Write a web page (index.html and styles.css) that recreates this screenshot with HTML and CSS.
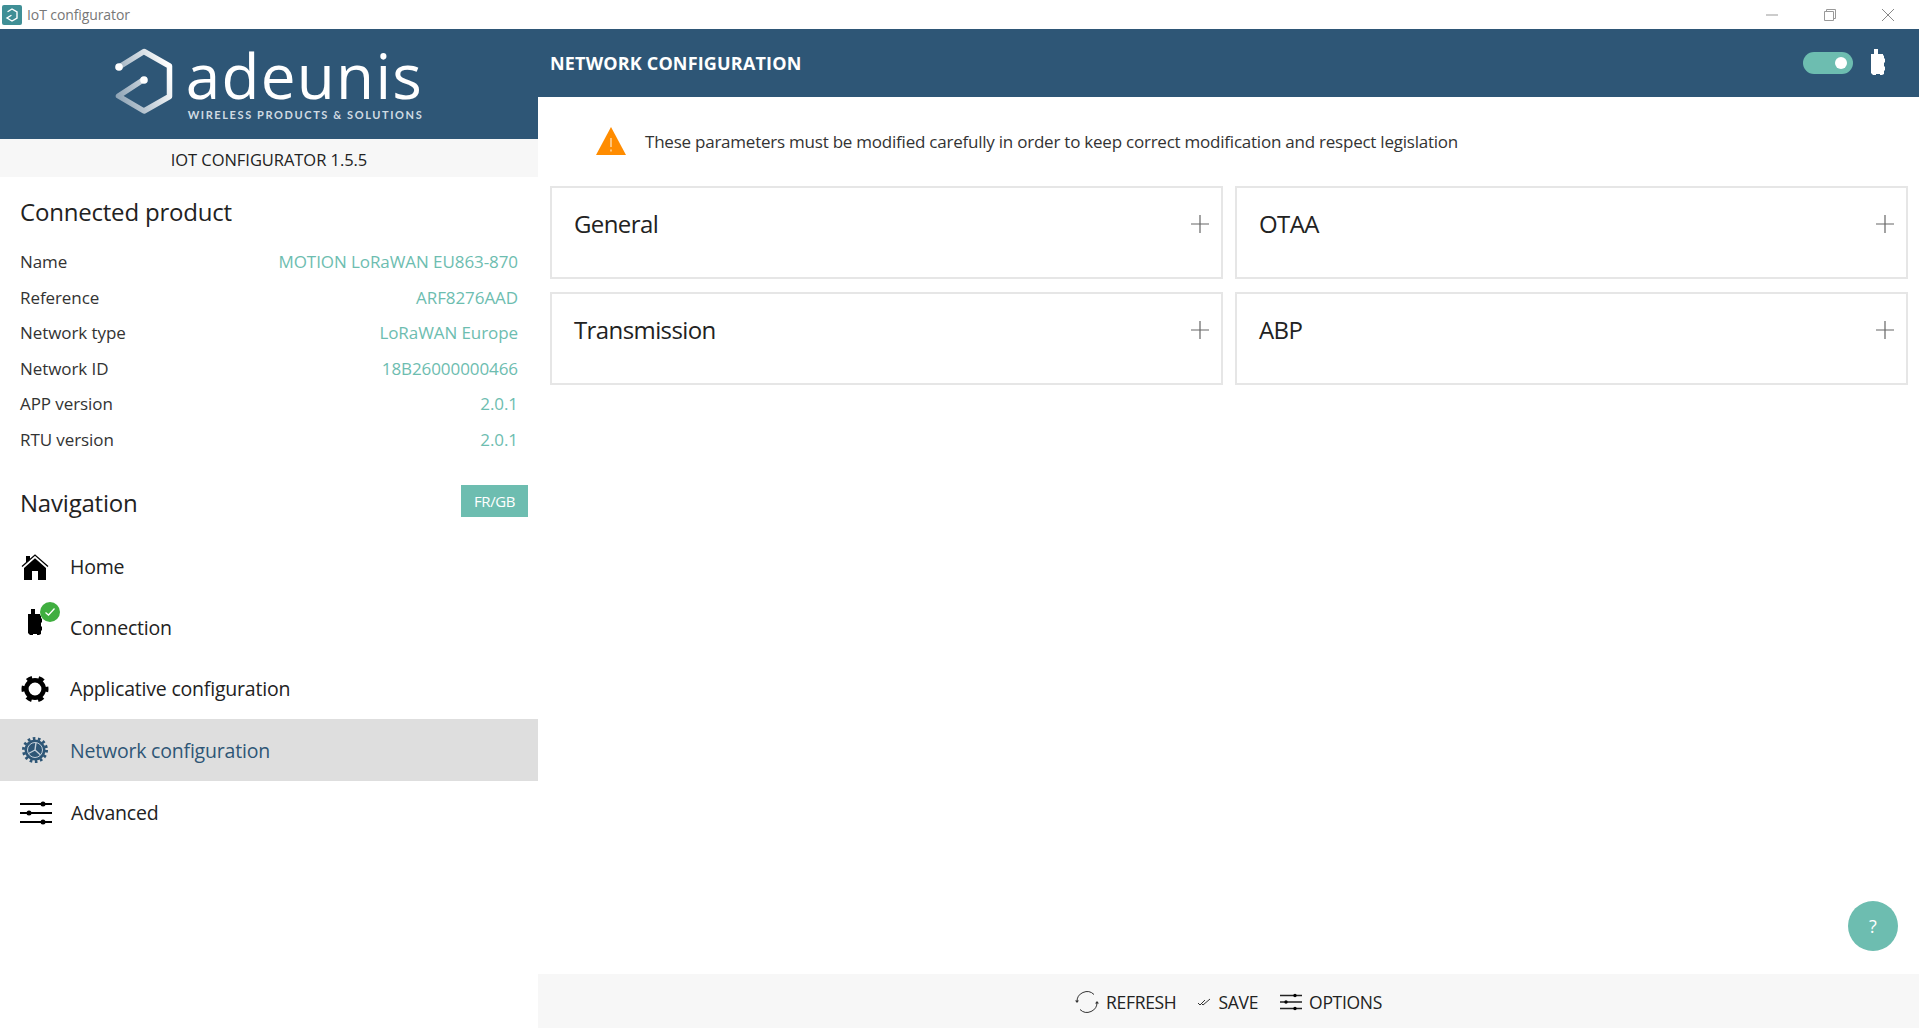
FILE: index.html
```html
<!DOCTYPE html>
<html lang="en">
<head>
  <meta charset="UTF-8">
  <title>IoT configurator</title>
  <link rel="stylesheet" href="styles.css">
</head>
<body>
  <!-- Window title bar -->
  <div class="titlebar">
    <div class="title-left">
      <svg class="app-icon" width="20" height="20" viewBox="0 0 20 20">
        <rect width="20" height="20" rx="2" fill="#3f8f96"/>
        <path d="M6 6.500 10 4l5 3v6l-5 3-5-3 4-2.500" fill="none" stroke="#fff" stroke-width="1.400" stroke-linecap="round"/>
      </svg>
      <span>IoT configurator</span>
    </div>
    <div class="window-btns">
      <svg width="14" height="14" viewBox="0 0 14 14"><path d="M1 7h12" stroke="#999" fill="none"/></svg>
      <svg width="14" height="14" viewBox="0 0 14 14"><path d="M1.500 3.500h9v9h-9zM3.500 3.500v-2h9v9h-2" stroke="#999" fill="none"/></svg>
      <svg width="14" height="14" viewBox="0 0 14 14"><path d="M1 1l12 12M13 1L1 13" stroke="#888" fill="none"/></svg>
    </div>
  </div>

  <div class="app">
    <!-- Sidebar -->
    <aside class="sidebar">
      <div class="logo">
        <svg class="logo-mark" width="58" height="66" viewBox="0 0 58 66">
          <defs>
            <linearGradient id="hexGrad" gradientUnits="userSpaceOnUse" x1="0" y1="50" x2="58" y2="30">
              <stop offset="0" stop-color="#8ba1b3"/>
              <stop offset="1" stop-color="#ffffff"/>
            </linearGradient>
          </defs>
          <path d="M4 19 29 3.500 54.500 18v30.500L29 63 3.500 48 28 32" fill="none" stroke="url(#hexGrad)" stroke-width="5.500" stroke-linejoin="round"/>
          <circle cx="4" cy="19" r="3.800" fill="#fff"/>
          <circle cx="29" cy="32" r="3.800" fill="#fff"/>
        </svg>
        <div class="logo-text">
          <div class="logo-name">adeunis</div>
          <div class="logo-tag">WIRELESS PRODUCTS &amp; SOLUTIONS</div>
        </div>
      </div>
      <div class="version">IOT CONFIGURATOR 1.5.5</div>

      <h2 class="side-title product-title">Connected product</h2>
      <div class="info-list">
        <div class="info-row"><span>Name</span><span class="info-val">MOTION LoRaWAN EU863-870</span></div>
        <div class="info-row"><span>Reference</span><span class="info-val">ARF8276AAD</span></div>
        <div class="info-row"><span>Network type</span><span class="info-val">LoRaWAN Europe</span></div>
        <div class="info-row"><span>Network ID</span><span class="info-val">18B26000000466</span></div>
        <div class="info-row"><span>APP version</span><span class="info-val">2.0.1</span></div>
        <div class="info-row"><span>RTU version</span><span class="info-val">2.0.1</span></div>
      </div>

      <div class="nav-head">
        <h2 class="side-title">Navigation</h2>
        <button class="lang-btn">FR/GB</button>
      </div>

      <nav class="nav">
        <div class="nav-item low-row">
          <svg class="nav-icon" width="30" height="30" viewBox="0 0 30 30">
            <path d="M2 14.500 15 3l13 11.500" fill="none" stroke="#000" stroke-width="1.300"/>
            <path d="M6 4h4v3.500L6 11zM4 16 15 6.300 26 16v12h-8v-9h-6v9H4z" fill="#000"/>
          </svg>
          <span>Home</span>
        </div>
        <div class="nav-item">
          <span class="nav-icon-wrap">
            <svg class="device-icon" width="14" height="28" viewBox="0 0 14 28">
              <path d="M3 0h4v5h5v1l1 1v2l1 1v3l-1 1v3l1 1v3l-1 1v3l-2 1H9v-1H5v1H2l-1-1-1-1V5h3z" fill="#000"/>
            </svg>
            <span class="check-badge">
              <svg width="12" height="10" viewBox="0 0 12 10"><path d="M1.500 5.500l3 2.500 6-6.500" fill="none" stroke="#fff" stroke-width="1.300"/></svg>
            </span>
          </span>
          <span>Connection</span>
        </div>
        <div class="nav-item">
          <svg class="nav-icon" width="30" height="30" viewBox="0 0 30 30">
            <circle cx="15" cy="15" r="8.700" fill="none" stroke="#000" stroke-width="4.600"/>
            <circle cx="15" cy="15" r="11.500" fill="none" stroke="#000" stroke-width="4" stroke-dasharray="5.500 6.543" stroke-dashoffset="2.750"/>
          </svg>
          <span>Applicative configuration</span>
        </div>
        <div class="nav-item active">
          <svg class="nav-icon" width="30" height="30" viewBox="0 0 30 30">
            <circle cx="15" cy="15" r="11.500" fill="none" stroke="#2e5676" stroke-width="3" stroke-dasharray="2.600 2.561"/>
            <circle cx="15" cy="15" r="10.500" fill="#2e5676"/>
            <circle cx="15" cy="15" r="7.500" fill="none" stroke="#c5d0da" stroke-width="1"/>
            <path d="M15 15 16 7.500M15 15l-6.500 3.500M15 15l5.500 5" stroke="#c5d0da" stroke-width="1.400" fill="none"/>
          </svg>
          <span>Network configuration</span>
        </div>
        <div class="nav-item low-row">
          <svg class="nav-icon" width="32" height="26" viewBox="0 0 32 26">
            <path d="M0 4h32M0 13h32M0 22h32" stroke="#000" stroke-width="2"/>
            <circle cx="23" cy="4" r="2.500"/><circle cx="9" cy="13" r="2.500"/><circle cx="23" cy="22" r="2.500"/>
          </svg>
          <span class="adv-label">Advanced</span>
        </div>
      </nav>
    </aside>

    <!-- Main content -->
    <main class="main">
      <header class="main-head">
        <h1>NETWORK CONFIGURATION</h1>
        <div class="head-right">
          <span class="toggle"><span class="knob"></span></span>
          <svg width="14" height="28" viewBox="0 0 14 28">
            <path d="M3 0h4v5h5v1l1 1v2l1 1v3l-1 1v3l1 1v3l-1 1v3l-2 1H9v-1H5v1H2l-1-1-1-1V5h3z" fill="#fff"/>
          </svg>
        </div>
      </header>

      <div class="warning">
        <svg width="30" height="30" viewBox="0 0 30 30">
          <path d="M15 1 30 29H0z" fill="#ff8c00"/>
          <path d="M15 12v9M15 23.500v2" stroke="#ffe2b8" stroke-width="1.300"/>
        </svg>
        <span>These parameters must be modified carefully in order to keep correct modification and respect legislation</span>
      </div>

      <div class="cards">
        <div class="card"><span>General</span><svg class="plus" width="18" height="18" viewBox="0 0 18 18"><path d="M9 0v18M0 9h18" stroke="#666" stroke-width="1.200" fill="none"/></svg></div>
        <div class="card"><span>OTAA</span><svg class="plus" width="18" height="18" viewBox="0 0 18 18"><path d="M9 0v18M0 9h18" stroke="#666" stroke-width="1.200" fill="none"/></svg></div>
        <div class="card"><span>Transmission</span><svg class="plus" width="18" height="18" viewBox="0 0 18 18"><path d="M9 0v18M0 9h18" stroke="#666" stroke-width="1.200" fill="none"/></svg></div>
        <div class="card"><span>ABP</span><svg class="plus" width="18" height="18" viewBox="0 0 18 18"><path d="M9 0v18M0 9h18" stroke="#666" stroke-width="1.200" fill="none"/></svg></div>
      </div>

      <button class="help-btn">?</button>

      <footer class="footer">
        <div class="foot-btn">
          <svg width="24" height="22" viewBox="0 0 24 22">
            <path d="M2 11a10 10 0 0 1 17-7.500M22 11A10 10 0 0 1 5 18.500" fill="none" stroke="#333"/>
            <path d="M0 9.500h4L2 12zM20 12.500h4L22 10z" fill="#333"/>
          </svg>
          <span>REFRESH</span>
        </div>
        <div class="foot-btn">
          <svg width="14" height="10" viewBox="0 0 14 10">
            <path d="M1 6l2 2 5-5M4 6l2 2 7-6" fill="none" stroke="#333"/>
          </svg>
          <span>SAVE</span>
        </div>
        <div class="foot-btn options-btn">
          <svg width="22" height="18" viewBox="0 0 22 18">
            <path d="M0 2.500h22M0 9h22M0 15.500h22" stroke="#222" stroke-width="1.300"/>
            <circle cx="15" cy="2.500" r="1.700"/><circle cx="6" cy="9" r="1.700"/><circle cx="15" cy="15.500" r="1.700"/>
          </svg>
          <span>OPTIONS</span>
        </div>
      </footer>
    </main>
  </div>
</body>
</html>
```

FILE: styles.css
```css
/* Layout */
html, body {
  height: 100%;
}

body {
  margin: 0;
  display: flex;
  flex-direction: column;
  font-family: 'Open Sans', 'Noto Sans', sans-serif;
  color: #222;
  background: #fff;
  overflow: hidden;
}

.titlebar {
  height: 29px;
  display: flex;
  justify-content: space-between;
  align-items: center;
  flex-shrink: 0;
}

.title-left {
  display: flex;
  align-items: center;
  gap: 5px;
  padding-left: 2px;
  font-size: 14px;
  letter-spacing: -0.1px;
  color: #777;
}

.window-btns {
  display: flex;
  gap: 44px;
  padding-right: 24px;
}

.app {
  flex: 1;
  display: flex;
  min-height: 0;
}

/* Sidebar */
.sidebar {
  width: 538px;
  flex-shrink: 0;
}

.logo {
  height: 110px;
  background: #2e5676;
  display: flex;
  justify-content: center;
  align-items: center;
  gap: 13px;
}

.logo-mark {
  margin-top: -6px;
}

.logo-text {
  margin-top: -1px;
  color: #fff;
}

.logo-name {
  font-size: 62px;
  font-weight: 500;
  line-height: 60px;
  letter-spacing: 1.3px;
}

.logo-tag {
  margin: 3px 0 0 2px;
  font-family: 'Lato', sans-serif;
  font-size: 11px;
  font-weight: 700;
  line-height: 14px;
  letter-spacing: 1.6px;
  color: #d0dbe3;
  white-space: nowrap;
}

.version {
  height: 38px;
  line-height: 41px;
  text-align: center;
  background: #f7f7f7;
  font-size: 16.500px;
  letter-spacing: -0.05px;
}

.side-title {
  margin: 0;
  font-size: 24px;
  font-weight: 400;
  letter-spacing: -0.2px;
  color: #222;
}

.product-title {
  padding: 18px 20px 0;
  line-height: 34px;
}

.info-list {
  padding: 15px 20px 0;
}

.info-row {
  display: flex;
  justify-content: space-between;
  height: 35.500px;
  line-height: 35.500px;
  font-size: 17px;
  letter-spacing: -0.08px;
  color: #333;
}

.info-val {
  color: #6dbdb0;
}

.nav-head {
  display: flex;
  justify-content: space-between;
  align-items: center;
  height: 32px;
  margin-top: 29px;
  padding: 0 10px 0 20px;
}

.lang-btn {
  width: 67px;
  height: 32px;
  margin-bottom: 2px;
  border: none;
  background: #6dbdb0;
  color: #fff;
  font-family: inherit;
  font-size: 15px;
  letter-spacing: -0.4px;
}

.nav {
  margin-top: 17px;
}

.nav-item {
  height: 61.500px;
  box-sizing: border-box;
  display: flex;
  align-items: center;
  gap: 20px;
  padding-left: 20px;
  font-size: 19.500px;
  letter-spacing: -0.2px;
  color: #222;
}

.low-row {
  padding-top: 2px;
}

.nav-item.active {
  height: 62.500px;
  margin-top: -1px;
  padding-top: 1px;
  background: #dedede;
  color: #2e5676;
}

.nav-icon-wrap {
  position: relative;
  display: flex;
  width: 30px;
  margin-top: -8px;
}

.device-icon {
  margin-left: 8px;
}

.check-badge {
  position: absolute;
  left: 20px;
  top: -7px;
  width: 20px;
  height: 20px;
  border-radius: 50%;
  background: #3fae3f;
  display: flex;
  align-items: center;
  justify-content: center;
}

.adv-label {
  margin-left: -1px;
}

/* Main */
.main {
  flex: 1;
  min-width: 0;
  display: flex;
  flex-direction: column;
  position: relative;
}

.main-head {
  height: 68px;
  flex-shrink: 0;
  background: #2e5676;
  display: flex;
  justify-content: space-between;
  align-items: center;
  padding: 0 34px 0 12px;
}

.main-head h1 {
  margin: 0;
  font-size: 18px;
  font-weight: 700;
  letter-spacing: 0.17px;
  color: #fff;
}

.head-right {
  display: flex;
  align-items: center;
  gap: 18px;
}

.toggle {
  width: 50px;
  height: 22px;
  border-radius: 11px;
  background: #6dbdb0;
  display: flex;
  align-items: center;
  justify-content: flex-end;
  padding-right: 6px;
  box-sizing: border-box;
}

.knob {
  width: 12px;
  height: 12px;
  border-radius: 50%;
  background: #fff;
}

.warning {
  display: flex;
  align-items: center;
  gap: 19px;
  padding: 29px 0 0 58px;
  font-size: 17px;
  letter-spacing: -0.23px;
  color: #333;
}

.cards {
  display: grid;
  grid-template-columns: 1fr 1fr;
  gap: 13px 12px;
  padding: 30px 11px 0 12px;
}

.card {
  height: 93px;
  box-sizing: border-box;
  border: 2px solid #e6e6e6;
  display: flex;
  justify-content: space-between;
  align-items: flex-start;
  padding: 19px 12px 0 22px;
  font-size: 24px;
  letter-spacing: -0.6px;
  color: #222;
}

.plus {
  margin-top: 8px;
}

.help-btn {
  position: absolute;
  right: 21px;
  bottom: 77px;
  width: 50px;
  height: 50px;
  border: none;
  border-radius: 50%;
  background: #6dbdb0;
  color: #fff;
  font-family: inherit;
  font-size: 18px;
}

.footer {
  height: 54px;
  margin-top: auto;
  box-sizing: border-box;
  padding: 2px 0 0 0;
  background: #f7f7f7;
  display: flex;
  justify-content: center;
  align-items: center;
  gap: 21px;
  font-size: 17.500px;
  letter-spacing: -0.3px;
  color: #222;
}

.foot-btn {
  display: flex;
  align-items: center;
  gap: 7px;
}

.options-btn {
  margin-left: 1px;
}
```
